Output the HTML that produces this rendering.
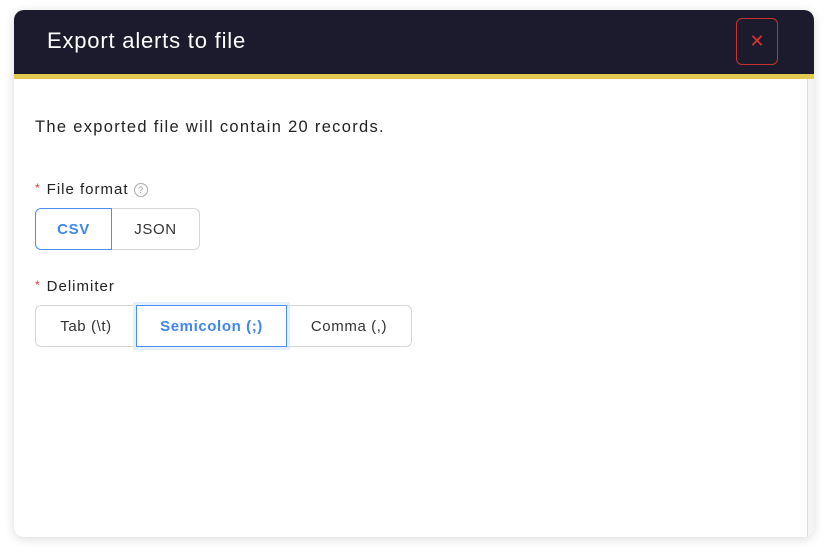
<!DOCTYPE html>
<html><head><style>
body{margin:0;width:828px;height:556px;background:#fff;font-family:"Liberation Sans",sans-serif;position:relative;overflow:hidden}
.modal{position:absolute;left:14px;top:10px;width:800px;height:527px;background:#fff;border-radius:10px;box-shadow:0 2px 10px rgba(0,0,0,.15);overflow:hidden}
.hd{position:absolute;left:0;top:0;width:800px;height:64px;background:#1c1b2e;border-bottom:5px solid #e2c94f}
.hd h1{position:absolute;left:33px;top:18px;margin:0;font-weight:normal;color:#fff;font-size:22px;letter-spacing:0.8px}
.x{position:absolute;left:722px;top:8px;width:40px;height:45px;border:1.5px solid #c8302f;border-radius:6px;color:#d33;font-size:18px;text-align:center;line-height:45px;font-family:"DejaVu Sans",sans-serif}
.t{position:absolute;color:#222;font-size:16.5px;letter-spacing:1.3px}
.lab{position:absolute;color:#222;font-size:15px;letter-spacing:1px}
.lab b{color:#e33;font-weight:normal;margin-right:6px;font-size:12px;vertical-align:top}
.grp{position:absolute;display:flex;height:42px}
.grp div{border:1px solid #d6d6d6;display:flex;align-items:center;justify-content:center;font-size:15px;letter-spacing:0.6px;color:#333;box-sizing:border-box;height:42px}
.grp .on{border:1.5px solid #4b8ff5;color:#3f86f2;font-weight:bold;box-shadow:0 0 0 3px #e6f0fd}
.sb{position:absolute;right:0;top:69px;width:6px;height:458px;background:#f4f4f4;border-left:1px solid #ddd}
</style></head><body>
<div class="modal">
<div class="hd"><h1>Export alerts to file</h1><div class="x">✕</div></div>
<div class="sb"></div>
<div class="t" style="left:21px;top:108px">The exported file will contain 20 records.</div>
<div class="lab" style="left:21px;top:171px"><b>*</b>File format <span style="display:inline-block;width:12px;height:12px;border:1px solid #aaa;border-radius:50%;font-size:9px;text-align:center;line-height:12px;color:#999;vertical-align:1px;letter-spacing:0">?</span></div>
<div class="grp" style="left:21px;top:198px">
<div class="on" style="width:77px;border-radius:6px 0 0 6px;box-shadow:none">CSV</div>
<div style="width:88px;border-radius:0 6px 6px 0;border-left:none">JSON</div></div>
<div class="lab" style="left:21px;top:268px"><b>*</b>Delimiter</div>
<div class="grp" style="left:21px;top:295px">
<div style="width:101px;border-radius:6px 0 0 6px;border-right:none">Tab (\t)</div>
<div class="on" style="width:151px">Semicolon (;)</div>
<div style="width:125px;border-radius:0 6px 6px 0;border-left:none">Comma (,)</div></div>
</div>
</body></html>
